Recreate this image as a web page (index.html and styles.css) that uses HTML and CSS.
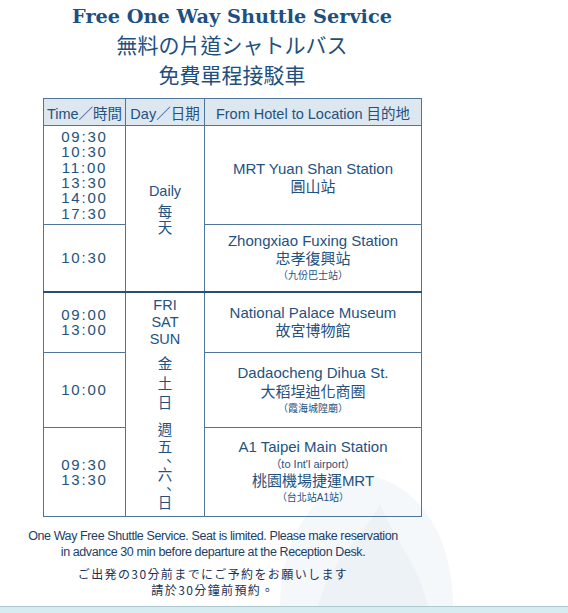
FILE: index.html
```html
<!DOCTYPE html>
<html lang="zh-Hant">
<head>
<meta charset="utf-8">
<title>Free One Way Shuttle Service</title>
<link rel="stylesheet" href="styles.css">
</head>
<body>
<div class="page">
  <svg class="watermark" width="175" height="140" viewBox="0 0 175 140" aria-hidden="true">
    <path d="M0 140 C 0 70, 35 18, 88 8 C 140 18, 173 70, 173 140 Z" fill="#f5f8fb"/>
    <path d="M38 140 C 48 95, 80 75, 100 37 C 116 75, 140 100, 148 140 Z" fill="#edf2f7"/>
  </svg>
  <div class="head">
    <div class="t-en">Free One Way Shuttle Service</div>
    <div class="t-cjk">無料の片道シャトルバス</div>
    <div class="t-cjk">免費單程接駁車</div>
  </div>
  <table class="sched">
    <colgroup><col class="c1"><col class="c2"><col class="c3"></colgroup>
    <thead>
      <tr class="rh">
        <th>Time／時間</th>
        <th>Day／日期</th>
        <th>From Hotel to Location 目的地</th>
      </tr>
    </thead>
    <tbody>
      <tr class="r1">
        <td class="time"><div>09:30</div><div>10:30</div><div>11:00</div><div>13:30</div><div>14:00</div><div>17:30</div></td>
        <td class="day" rowspan="2">
          <div class="d-en">Daily</div>
          <div class="d-ch d-first">每</div>
          <div class="d-ch">天</div>
        </td>
        <td class="loc loc-r1"><div class="en">MRT Yuan Shan Station</div><div class="zh">圓山站</div></td>
      </tr>
      <tr class="r2">
        <td class="time"><div>10:30</div></td>
        <td class="loc"><div class="en">Zhongxiao Fuxing Station</div><div class="zh">忠孝復興站</div><div class="sm">（九份巴士站）</div></td>
      </tr>
      <tr class="r3 split">
        <td class="time"><div>09:00</div><div>13:00</div></td>
        <td class="day" rowspan="3">
          <div class="w-en">FRI</div>
          <div class="w-en">SAT</div>
          <div class="w-en">SUN</div>
          <div class="w-jp w-gap">金</div>
          <div class="w-jp">土</div>
          <div class="w-jp">日</div>
          <div class="w-zh w-gap2">週</div>
          <div class="w-zh">五</div>
          <div class="w-comma">、</div>
          <div class="w-zh">六</div>
          <div class="w-comma">、</div>
          <div class="w-zh">日</div>
        </td>
        <td class="loc"><div class="en">National Palace Museum</div><div class="zh">故宮博物館</div></td>
      </tr>
      <tr class="r4">
        <td class="time"><div>10:00</div></td>
        <td class="loc"><div class="en en-l">Dadaocheng Dihua St.</div><div class="zh zh-l">大稻埕迪化商圈</div><div class="sm">（霞海城隍廟）</div></td>
      </tr>
      <tr class="r5">
        <td class="time"><div>09:30</div><div>13:30</div></td>
        <td class="loc"><div class="en">A1 Taipei Main Station</div><div class="sm-en">（to Int'l airport）</div><div class="zh">桃園機場捷運MRT</div><div class="sm">（台北站A1站）</div></td>
      </tr>
    </tbody>
  </table>
  <div class="foot">
    <p class="f-en">One Way Free Shuttle Service. Seat is limited. Please make reservation<br>in advance 30 min before departure at the Reception Desk.</p>
    <p class="f-cjk">ご出発の30分前までにご予約をお願いします<br>請於30分鐘前預約。</p>
  </div>
  <div class="bar"></div>
</div>
</body>
</html>
```

FILE: styles.css
```css
* { box-sizing: border-box; }
html, body { margin: 0; padding: 0; background: #ffffff; }
.page {
  position: relative;
  width: 568px;
  height: 613px;
  display: flex;
  flex-direction: column;
  overflow: hidden;
}
.watermark {
  position: absolute;
  left: 280px;
  top: 467px;
  z-index: 0;
}
.head, .sched, .foot { position: relative; z-index: 1; }
.head {
  width: 464px;
  text-align: center;
  color: #1e4f7e;
  padding-top: 4px;
}
.t-en {
  font-family: "DejaVu Serif", "Liberation Serif", serif;
  font-weight: bold;
  font-size: 19.3px;
  line-height: 26px;
}
.t-cjk {
  font-family: "Noto Sans CJK JP", "Noto Sans CJK TC", sans-serif;
  font-size: 21px;
  line-height: 29.5px;
}
.sched {
  margin: 9px 0 0 43px;
  width: 378px;
  border-collapse: collapse;
  table-layout: fixed;
  font-family: "Liberation Sans", "Noto Sans CJK TC", sans-serif;
  color: #24527f;
  text-align: center;
}
.c1 { width: 82px; }
.c2 { width: 79px; }
.c3 { width: 217px; }
.sched th, .sched td {
  border: 1px solid #4f7699;
  padding: 0;
  vertical-align: middle;
}
.sched th {
  background: #dde7f0;
  font-weight: normal;
  font-size: 14.5px;
  height: 27px;
  color: #24527f;
}
.r1 { height: 99px; }
.r2 { height: 67px; }
.r3 { height: 61px; }
.r4 { height: 75px; }
.r5 { height: 89px; }
.split td { border-top: 2px solid #2a4f77; }
.time {
  font-size: 15px;
  line-height: 15.4px;
  letter-spacing: 1.8px;
}
.day { font-size: 14.5px; }
.d-en { line-height: 20px; }
.d-ch { line-height: 16px; font-size: 14.5px; }
.d-first { margin-top: 3px; }
.w-en { line-height: 17px; }
.w-jp { line-height: 19.5px; font-size: 14.5px; }
.w-gap { margin-top: 7px; }
.w-zh { line-height: 17px; font-size: 14.5px; }
.w-gap2 { margin-top: 8px; }
.w-comma { line-height: 11px; font-size: 14.5px; padding-left: 8px; }
.loc .en { font-size: 15px; line-height: 18px; }
.loc .zh { font-size: 15px; line-height: 18px; }
.loc .en-l, .loc .zh-l { line-height: 19px; }
.loc .sm { font-size: 10px; line-height: 16px; }
.loc .sm-en { font-size: 11px; line-height: 16px; }
.loc-r1 { padding-top: 6px !important; }
.foot {
  width: 426px;
  text-align: center;
  margin-top: 11px;
}
.foot p { margin: 0; }
.f-en {
  font-family: "Liberation Sans", sans-serif;
  font-size: 12.5px;
  letter-spacing: -0.4px;
  white-space: nowrap;
  line-height: 16px;
  color: #1d3e66;
}
.f-cjk {
  margin-top: 6px !important;
  font-family: "Noto Sans CJK JP", "Noto Sans CJK TC", sans-serif;
  font-size: 12px;
  letter-spacing: 1.4px;
  line-height: 16px;
  color: #1b3156;
}
.bar {
  margin-top: auto;
  height: 7px;
  background: #d7ecf1;
  border-top: 1px solid #afc9d0;
  position: relative;
  z-index: 1;
}
```
